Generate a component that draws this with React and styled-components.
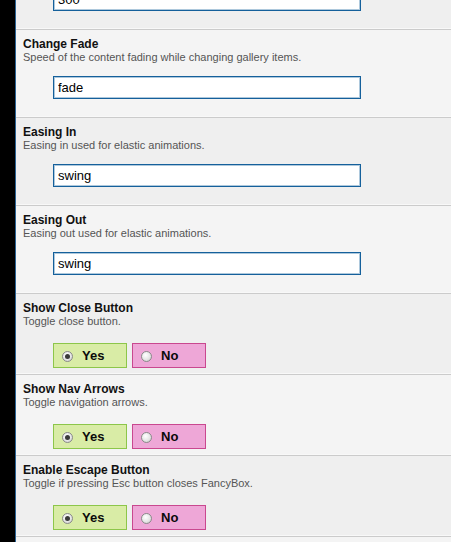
import styled, { createGlobalStyle } from "styled-components";

const GlobalStyle = createGlobalStyle`
  html, body {
    margin: 0;
    padding: 0;
    background: #000;
    overflow: hidden;
  }
  body {
    font-family: "Liberation Sans", Arial, sans-serif;
  }
`;

const settings = [
  { type: "text", title: "Animation Speed", desc: "Speed of the animation.", value: "300" },
  { type: "text", title: "Change Fade", desc: "Speed of the content fading while changing gallery items.", value: "fade" },
  { type: "text", title: "Easing In", desc: "Easing in used for elastic animations.", value: "swing" },
  { type: "text", title: "Easing Out", desc: "Easing out used for elastic animations.", value: "swing" },
  { type: "toggle", title: "Show Close Button", desc: "Toggle close button.", value: true },
  { type: "toggle", title: "Show Nav Arrows", desc: "Toggle navigation arrows.", value: true },
  { type: "toggle", title: "Enable Escape Button", desc: "Toggle if pressing Esc button closes FancyBox.", value: true },
];

function App() {
  return (
    <>
      <GlobalStyle />
      <Page>
        <Sidebar />
        <Panel>
          {settings.map((s, i) => (
            <Row key={s.title} $alt={i % 2 === 1} $toggle={s.type === "toggle"}>
              <Title>{s.title}</Title>
              <Desc>{s.desc}</Desc>
              {s.type === "text" ? (
                <Field type="text" defaultValue={s.value} />
              ) : (
                <Toggle>
                  <Choice $variant="yes">
                    <Radio $checked={s.value} />
                    Yes
                  </Choice>
                  <Choice $variant="no">
                    <Radio $checked={!s.value} />
                    No
                  </Choice>
                </Toggle>
              )}
            </Row>
          ))}
        </Panel>
      </Page>
    </>
  );
}

const Page = styled.div`
  display: flex;
  width: 451px;
  height: 542px;
  overflow: hidden;
  background: #000;
`;

const Sidebar = styled.div`
  flex: 0 0 15px;
  background: #000;
  border-right: 1px solid #2b6394;
`;

const Panel = styled.div`
  flex: 1;
  margin-top: -58px;
  display: flex;
  flex-direction: column;
  background: #f4f4f4;
`;

const Row = styled.div`
  padding: 7px 7px ${(p) => (p.$toggle ? "6px" : "18px")};
  background: ${(p) => (p.$alt ? "#f4f4f4" : "#efefef")};
  border-bottom: 1px solid #cbcbcb;
  box-shadow: inset 0 -1px 0 #f8f8f8;
`;

const Title = styled.div`
  font-size: 12px;
  line-height: 14px;
  font-weight: bold;
  color: #111;
`;

const Desc = styled.div`
  font-size: 11px;
  line-height: 13px;
  color: #555;
  min-height: 13px;
`;

const Field = styled.input`
  display: block;
  box-sizing: border-box;
  width: 308px;
  height: 23px;
  margin: 12px 0 0 30px;
  padding: 0 4px;
  border: 1px solid #15609b;
  box-shadow: inset 0 0 0 1px rgba(21, 96, 155, 0.35);
  background: #fff;
  font-family: "Liberation Sans", Arial, sans-serif;
  font-size: 13px;
  color: #000;
  outline: none;
`;

const Toggle = styled.div`
  display: flex;
  gap: 5px;
  margin: 15px 0 0 30px;
`;

const Choice = styled.div`
  box-sizing: border-box;
  display: flex;
  align-items: center;
  gap: 9px;
  width: 74px;
  height: 25px;
  padding-left: 8px;
  font-size: 13px;
  font-weight: bold;
  color: #0a0a0a;
  background: ${(p) => (p.$variant === "yes" ? "#d9eca6" : "#eea7d7")};
  border: 1px solid ${(p) => (p.$variant === "yes" ? "#8dc64a" : "#c9488f")};
`;

const Radio = styled.span`
  position: relative;
  box-sizing: border-box;
  width: 11px;
  height: 11px;
  margin-top: 2px;
  border-radius: 50%;
  border: 1px solid #8a8a8a;
  background: radial-gradient(circle at 40% 35%, #ffffff 0%, #e6e6e6 55%, #c4c4c4 100%);
  &::after {
    content: "";
    display: ${(p) => (p.$checked ? "block" : "none")};
    position: absolute;
    left: 2px;
    top: 2px;
    width: 5px;
    height: 5px;
    border-radius: 50%;
    background: #3a3a3a;
  }
`;

export default App;
